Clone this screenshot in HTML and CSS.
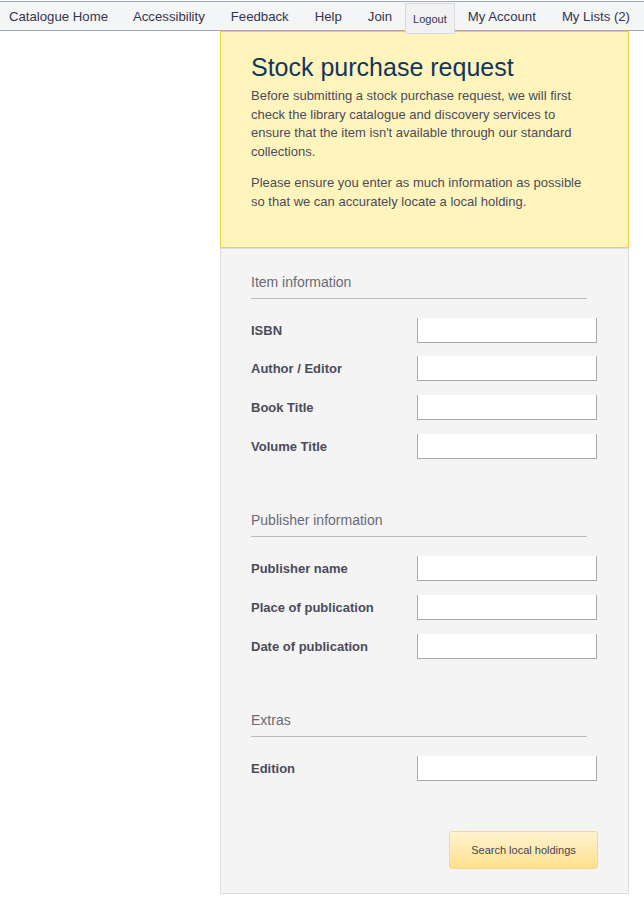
FILE: index.html
```html
<!DOCTYPE html>
<html lang="en">
<head>
<meta charset="utf-8">
<title>Stock purchase request</title>
<link rel="stylesheet" href="styles.css">
</head>
<body>
<nav class="topnav">
  <ul class="topnav-list">
    <li class="topnav-item"><a href="#">Catalogue Home</a></li>
    <li class="topnav-item"><a href="#">Accessibility</a></li>
    <li class="topnav-item"><a href="#">Feedback</a></li>
    <li class="topnav-item"><a href="#">Help</a></li>
    <li class="topnav-item"><a href="#">Join</a></li>
    <li class="topnav-item topnav-logout"><button type="button" class="logout-btn">Logout</button></li>
    <li class="topnav-item"><a href="#">My Account</a></li>
    <li class="topnav-item"><a href="#">My Lists (2)</a></li>
  </ul>
</nav>
<div class="layout">
  <aside class="sidebar"></aside>
  <main class="content">
    <section class="intro">
      <h1 class="intro-title">Stock purchase request</h1>
      <p class="intro-text">Before submitting a stock purchase request, we will first check the library catalogue and discovery services to ensure that the item isn't available through our standard collections.</p>
      <p class="intro-text">Please ensure you enter as much information as possible so that we can accurately locate a local holding.</p>
    </section>
    <form class="request-form">
      <fieldset class="form-section">
        <h2 class="section-title">Item information</h2>
        <div class="rows">
          <label class="row"><span class="row-label">ISBN</span><input class="row-input" type="text"></label>
          <label class="row"><span class="row-label">Author / Editor</span><input class="row-input" type="text"></label>
          <label class="row"><span class="row-label">Book Title</span><input class="row-input" type="text"></label>
          <label class="row"><span class="row-label">Volume Title</span><input class="row-input" type="text"></label>
        </div>
      </fieldset>
      <fieldset class="form-section">
        <h2 class="section-title">Publisher information</h2>
        <div class="rows">
          <label class="row"><span class="row-label">Publisher name</span><input class="row-input" type="text"></label>
          <label class="row"><span class="row-label">Place of publication</span><input class="row-input" type="text"></label>
          <label class="row"><span class="row-label">Date of publication</span><input class="row-input" type="text"></label>
        </div>
      </fieldset>
      <fieldset class="form-section">
        <h2 class="section-title">Extras</h2>
        <div class="rows">
          <label class="row"><span class="row-label">Edition</span><input class="row-input" type="text"></label>
        </div>
      </fieldset>
      <div class="form-actions">
        <button type="button" class="submit-btn">Search local holdings</button>
      </div>
    </form>
  </main>
</div>
</body>
</html>
```
FILE: styles.css
```css
* { box-sizing: border-box; }

body {
  margin: 0;
  background: #ffffff;
  font-family: "Liberation Sans", Arial, sans-serif;
  color: #4b4b5b;
}

/* Top navigation */
.topnav {
  margin-top: 1px;
  height: 30px;
  background: #f4f5f7;
  border-top: 1px solid #a3a8b8;
  border-bottom: 1px solid #a3a8b8;
}
.topnav-list {
  list-style: none;
  margin: 0;
  padding: 0;
  display: flex;
  align-items: flex-start;
  height: 28px;
  white-space: nowrap;
}
.topnav-item { flex: 0 0 auto; }
.topnav-item a {
  display: block;
  padding: 0 13px;
  height: 28px;
  line-height: 29px;
  font-size: 13.2px;
  color: #34344e;
  text-decoration: none;
  white-space: nowrap;
}
.topnav-item:first-child a { padding-left: 9px; padding-right: 12px; }
.topnav-item:last-child a { padding-right: 0; }
.logout-btn {
  position: relative;
  z-index: 1;
  margin-top: 1px;
  height: 31px;
  padding: 0 7px;
  border: 1px solid #d9d9e6;
  background: #f1f1f2;
  font-family: "Liberation Sans", Arial, sans-serif;
  font-size: 11px;
  color: #34344e;
  white-space: nowrap;
  cursor: pointer;
}

/* Layout */
.layout {
  display: grid;
  grid-template-columns: 220px 409px;
}

/* Intro box */
.intro {
  background: #fff5bc;
  border: 1px solid #f5cf3f;
  padding: 20px 40px 35px 30px;
}
.intro-title {
  margin: 0 0 5px;
  font-size: 25px;
  line-height: 30px;
  font-weight: normal;
  color: #12365d;
}
.intro-text {
  margin: 0;
  font-size: 13px;
  line-height: 18.6px;
  color: #4b4b5b;
}
.intro-text + .intro-text { margin-top: 13px; }

/* Form panel */
.request-form {
  background: #f4f4f4;
  border: 1px solid #dcdce9;
  padding: 25px 30px 24px 30px;
}
.form-section {
  margin: 0;
  padding: 0;
  border: 0;
  min-width: 0;
}
.form-section + .form-section { margin-top: 53px; }
.section-title {
  width: 336px;
  margin: 0 0 19px;
  padding-bottom: 7px;
  border-bottom: 1px solid #bcbcbc;
  font-size: 14px;
  line-height: 17px;
  font-weight: normal;
  color: #6a6a76;
}
.rows {
  display: flex;
  flex-direction: column;
  gap: 13.9px;
}
.row {
  display: grid;
  grid-template-columns: 166px 180px;
  align-items: center;
}
.row-label {
  font-size: 13px;
  font-weight: bold;
  color: #4b4b5b;
}
.row-input {
  display: block;
  width: 180px;
  height: 25px;
  margin: 0;
  padding: 0 4px;
  background: #ffffff;
  border: 1px solid #a9a9a9;
  border-top: 0;
  border-radius: 0;
  font-family: "Liberation Sans", Arial, sans-serif;
  font-size: 13px;
}

.form-actions {
  width: 347px;
  margin-top: 50px;
  display: flex;
  justify-content: flex-end;
}
.submit-btn {
  width: 149px;
  height: 38px;
  padding: 0;
  border: 1px solid #f5d98a;
  border-radius: 3px;
  background: linear-gradient(#fff4d0, #ffe08e);
  font-family: "Liberation Sans", Arial, sans-serif;
  font-size: 11px;
  color: #444450;
  cursor: pointer;
}
```
